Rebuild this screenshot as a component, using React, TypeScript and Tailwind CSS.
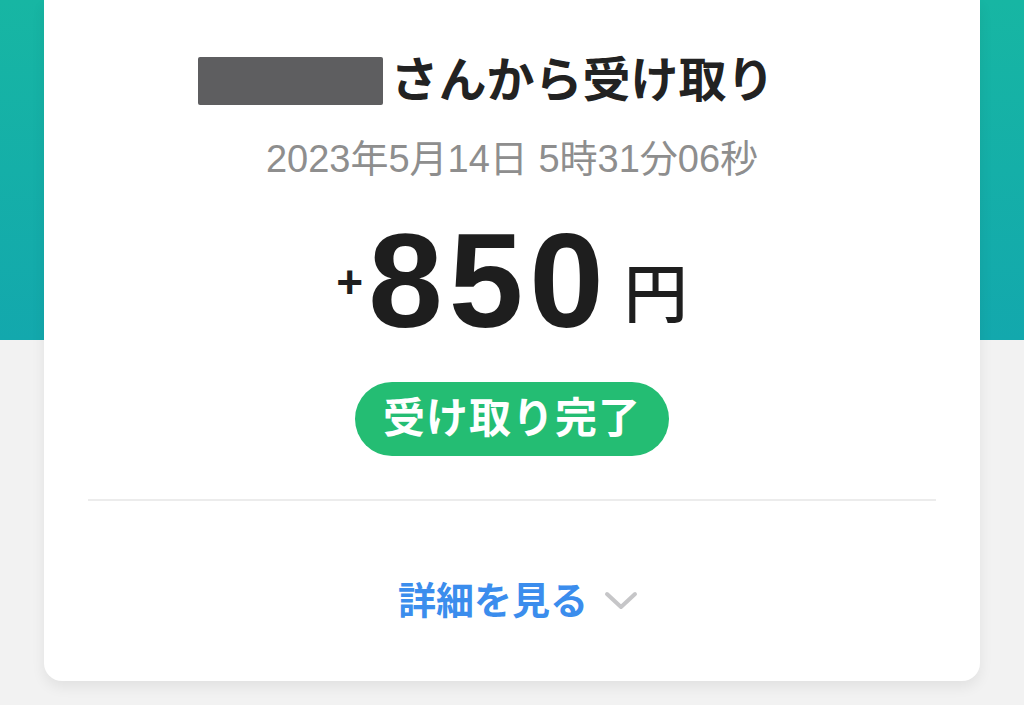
const jp = "font-['Liberation_Sans','Noto_Sans_CJK_JP',sans-serif]";

function ChevronDown() {
  return (
    <svg width="34" height="20" viewBox="0 0 34 20" fill="none">
      <path
        d="M3 3 L17 16 L31 3"
        stroke="#c6c6c8"
        strokeWidth="4"
        strokeLinecap="round"
        strokeLinejoin="round"
      />
    </svg>
  );
}

export default function App() {
  return (
    <div
      className={`w-full h-[705px] overflow-hidden bg-[linear-gradient(to_bottom,#17b6a3_0px,#13a8ad_340px,#f2f2f2_340px,#f2f2f2_100%)] ${jp}`}
    >
      <div className="px-[44px]">
        <div className="h-[681px] bg-white rounded-b-[18px] shadow-[0_6px_14px_rgba(0,0,0,0.07)] flex flex-col items-center">
          {/* sender */}
          <div className="mt-[57px] h-[48px] flex items-center pr-[51px]">
            <div className="w-[185px] h-[48px] bg-[#5e5e60] rounded-[2px]" />
            <div className="ml-[7px] text-[48px] leading-none font-bold text-[#222222]">
              さんから受け取り
            </div>
          </div>

          {/* date */}
          <div className="mt-[33px] h-[42px] flex items-center text-[38px] leading-none text-[#8e8e8e]">
            2023年5月14日 5時31分06秒
          </div>

          {/* amount */}
          <div className="mt-[53px] h-[110px] flex items-end pb-[11px] text-[#1e1e1e]">
            <span className="text-[46px] font-bold leading-none mb-[27px] mr-[5px]">+</span>
            <span className="text-[134px] font-bold leading-[0.76] tracking-[6px] font-['Liberation_Sans',sans-serif]">
              850
            </span>
            <span className="ml-[14px] text-[64px] leading-none font-medium mb-[5px]">円</span>
          </div>

          {/* status */}
          <div className="mt-[39px] w-[314px] h-[74px] rounded-full bg-[#24bd73] flex items-center justify-center text-white text-[42px] font-bold leading-none tracking-[1px]">
            受け取り完了
          </div>

          {/* divider */}
          <div className="mt-[43px] self-stretch mx-[44px] h-[2px] bg-[#ececec]" />

          {/* details */}
          <div className="mt-[81px] pl-[12px] flex items-center gap-[16px]">
            <span className="text-[38px] font-bold leading-none text-[#3b8ded]">詳細を見る</span>
            <ChevronDown />
          </div>
        </div>
      </div>
    </div>
  );
}
